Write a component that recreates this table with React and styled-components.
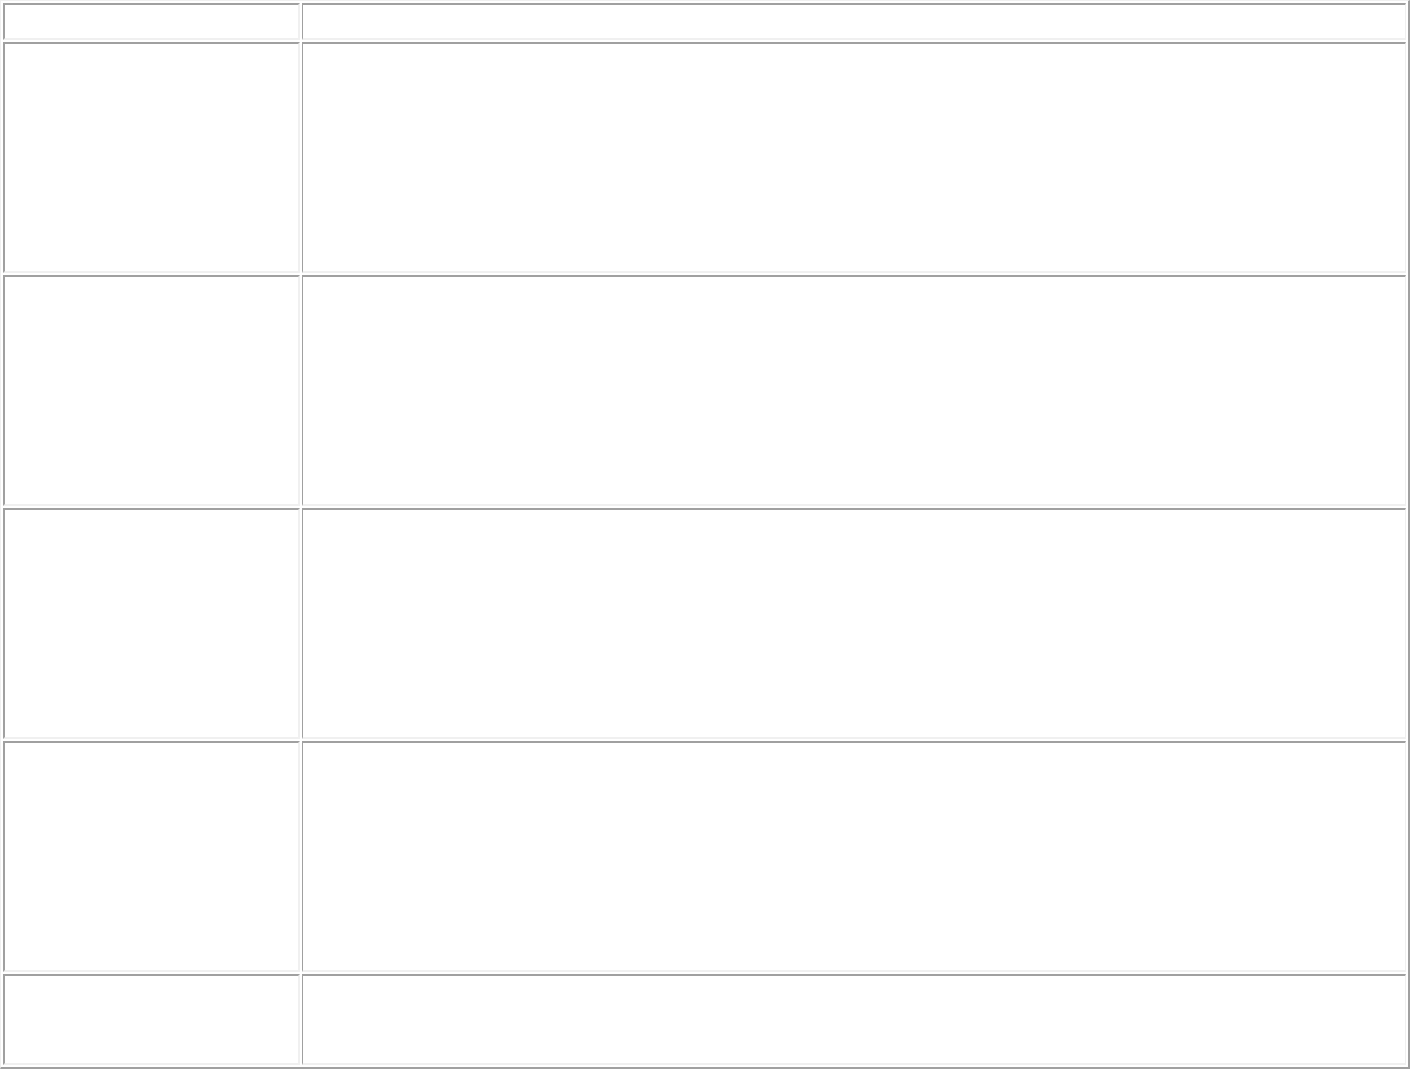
import React from "react";
import styled, { createGlobalStyle } from "styled-components";

const GlobalStyle = createGlobalStyle`
  html, body {
    margin: 0;
    padding: 0;
    background: #ffffff;
    font-family: "Liberation Serif", serif;
  }
`;

const Grid = styled.table`
  width: 1410px;
  border-collapse: separate;
  border-spacing: 2px;
  border-style: solid;
  border-width: 1px 2px 2px 1px;
  border-color: #f0f0f0 #a0a0a0 #a0a0a0 #f0f0f0;
  box-sizing: border-box;
`;

const Cell = styled.td`
  box-sizing: border-box;
  padding: 1px;
  height: ${(props) => props.h}px;
  width: ${(props) => (props.side ? "297px" : "auto")};
  border-style: solid;
  border-width: ${(props) => (props.side ? "2px" : "2px 1px")};
  border-color: #a0a0a0 #f0f0f0 #f0f0f0 #a0a0a0;
`;

const rows = [37, 231, 231, 231, 231, 91];

export default function App() {
  return (
    <>
      <GlobalStyle />
      <Grid>
        <tbody>
          {rows.map((h, i) => (
            <tr key={i}>
              <Cell side h={h} />
              <Cell h={h} />
            </tr>
          ))}
        </tbody>
      </Grid>
    </>
  );
}
